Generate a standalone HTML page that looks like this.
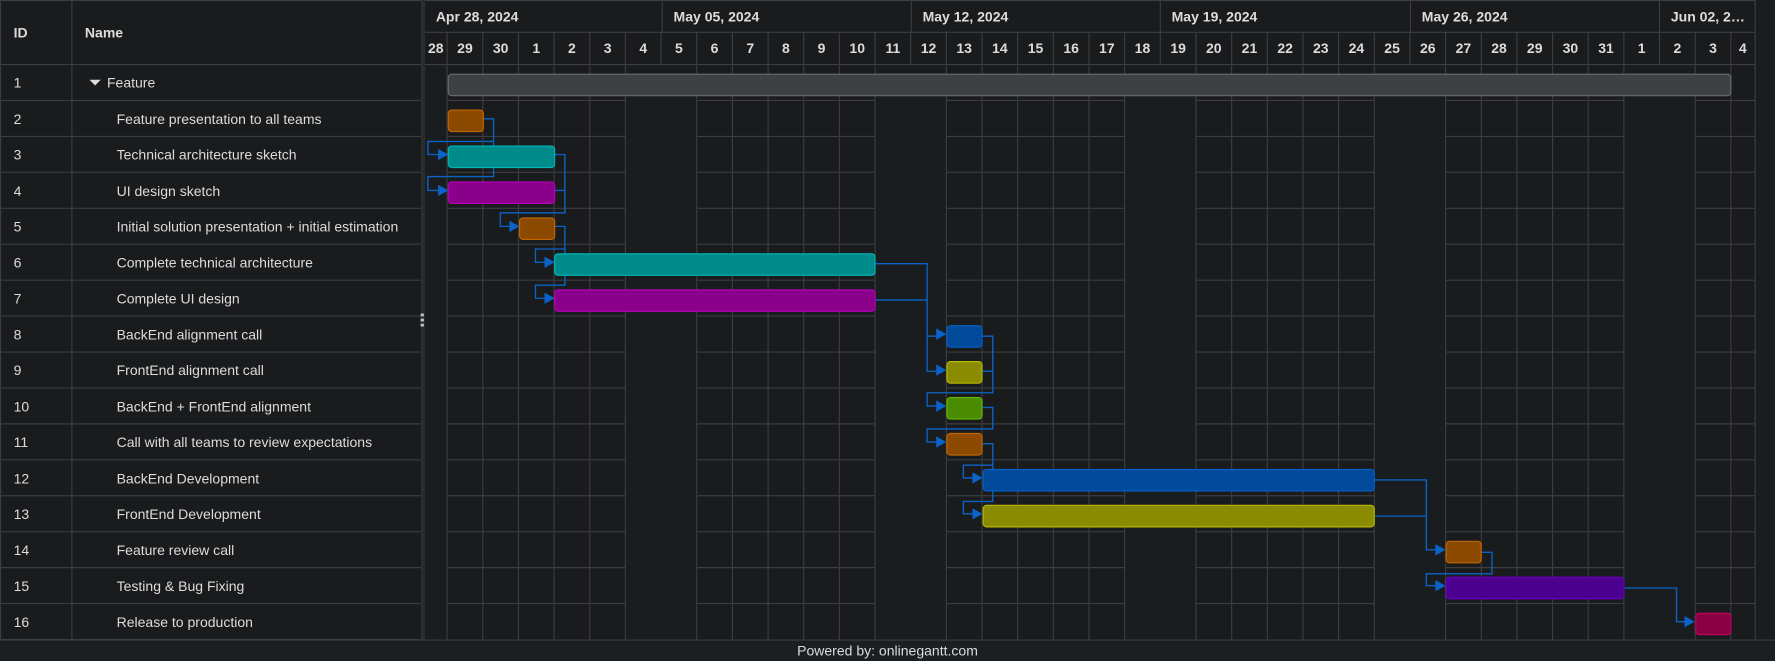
<!DOCTYPE html>
<html><head><meta charset="utf-8"><style>
html,body{margin:0;padding:0;background:#1a1b1d;overflow:hidden}
svg{display:block}
text{font-family:"Liberation Sans",Arial,sans-serif;fill:#dcdcdc}
.h{font-weight:bold;font-size:12.4px}
.t{font-size:12.4px}
.d{font-weight:bold;font-size:12.4px;text-anchor:middle}
.g{stroke:#3b3d40;stroke-width:1;fill:none}
.a{stroke:#0a64c8;stroke-width:1.2;fill:none}
.ah{fill:#0a64c8}
</style></head><body>
<svg width="1775" height="661" viewBox="0 0 1568 584" preserveAspectRatio="none" xmlns="http://www.w3.org/2000/svg">
<rect x="0" y="0" width="1568" height="584" fill="#1a1b1d"/>
<g fill="#1a1d1f">
<rect x="375" y="57" width="20" height="508"/>
<rect x="552.5" y="57" width="63" height="508"/>
<rect x="773" y="57" width="63" height="508"/>
<rect x="993.5" y="57" width="63" height="508"/>
<rect x="1214" y="57" width="63" height="508"/>
<rect x="1434.5" y="57" width="63" height="508"/>
<rect x="1550" y="0" width="18" height="565"/>
</g>
<rect x="0" y="565" width="1568" height="19" fill="#1c1f21"/>
<line x1="0" y1="565.5" x2="1568" y2="565.5" class="g"/>
<text x="784" y="579" class="t" text-anchor="middle">Powered by: onlinegantt.com</text>
<g class="g">
<path id="rl" d="M395 0H552.5M615.5 0H773M836 0H993.5M1056.5 0H1214M1277 0H1434.5M1497.5 0H1550"/>
</g>
<g class="g">
<use href="#rl" y="88.75"/><use href="#rl" y="120.5"/><use href="#rl" y="152.25"/><use href="#rl" y="184"/><use href="#rl" y="215.75"/><use href="#rl" y="247.5"/><use href="#rl" y="279.25"/><use href="#rl" y="311"/><use href="#rl" y="342.75"/><use href="#rl" y="374.5"/><use href="#rl" y="406.25"/><use href="#rl" y="438"/><use href="#rl" y="469.75"/><use href="#rl" y="501.5"/><use href="#rl" y="533.25"/>
</g>
<g class="g">
<rect x="0.5" y="0.5" width="372" height="564.5"/>
<line x1="63.5" y1="0" x2="63.5" y2="565"/>
<path d="M0 57H373M0 88.75H373M0 120.5H373M0 152.25H373M0 184H373M0 215.75H373M0 247.5H373M0 279.25H373M0 311H373M0 342.75H373M0 374.5H373M0 406.25H373M0 438H373M0 469.75H373M0 501.5H373M0 533.25H373"/>
<path d="M375 0.5H1550M375 28.5H1550M375 57H1550M1550.5 0V565"/>
<path d="M585 0V28M805 0V28M1025 0V28M1246 0V28M1466 0V28"/>
<path d="M395 28V57M426.5 28V57M458 28V57M489.5 28V57M521 28V57M552.5 28V57M584 28V57M615.5 28V57M647 28V57M678.5 28V57M710 28V57M741.5 28V57M773 28V57M804.5 28V57M836 28V57M867.5 28V57M899 28V57M930.5 28V57M962 28V57M993.5 28V57M1025 28V57M1056.5 28V57M1088 28V57M1119.5 28V57M1151 28V57M1182.5 28V57M1214 28V57M1245.5 28V57M1277 28V57M1308.5 28V57M1340 28V57M1371.5 28V57M1403 28V57M1434.5 28V57M1466 28V57M1497.5 28V57M1529 28V57"/>
<path d="M395 57V565M426.5 57V565M458 57V565M489.5 57V565M521 57V565M552.5 57V565M615.5 57V565M647 57V565M678.5 57V565M710 57V565M741.5 57V565M773 57V565M836 57V565M867.5 57V565M899 57V565M930.5 57V565M962 57V565M993.5 57V565M1056.5 57V565M1088 57V565M1119.5 57V565M1151 57V565M1182.5 57V565M1214 57V565M1277 57V565M1308.5 57V565M1340 57V565M1371.5 57V565M1403 57V565M1434.5 57V565M1497.5 57V565M1529 57V565"/>
</g>
<rect x="372" y="0" width="3.5" height="565" fill="#2a2d30"/>
<rect x="371.5" y="277" width="3" height="2.5" fill="#bbb"/><rect x="371.5" y="281.5" width="3" height="2.5" fill="#bbb"/><rect x="371.5" y="286" width="3" height="2.5" fill="#bbb"/>
<text x="12" y="33" class="h">ID</text>
<text x="75" y="33" class="h">Name</text>
<text x="385" y="19" class="h">Apr 28, 2024</text>
<text x="595" y="19" class="h">May 05, 2024</text>
<text x="815" y="19" class="h">May 12, 2024</text>
<text x="1035" y="19" class="h">May 19, 2024</text>
<text x="1256" y="19" class="h">May 26, 2024</text>
<text x="1476" y="19" class="h">Jun 02, 2…</text>
<g>
<text x="385" y="47" class="d">28</text><text x="410.75" y="47" class="d">29</text><text x="442.25" y="47" class="d">30</text><text x="473.75" y="47" class="d">1</text><text x="505.25" y="47" class="d">2</text><text x="536.75" y="47" class="d">3</text><text x="568.25" y="47" class="d">4</text><text x="599.75" y="47" class="d">5</text><text x="631.25" y="47" class="d">6</text><text x="662.75" y="47" class="d">7</text><text x="694.25" y="47" class="d">8</text><text x="725.75" y="47" class="d">9</text><text x="757.25" y="47" class="d">10</text><text x="788.75" y="47" class="d">11</text><text x="820.25" y="47" class="d">12</text><text x="851.75" y="47" class="d">13</text><text x="883.25" y="47" class="d">14</text><text x="914.75" y="47" class="d">15</text><text x="946.25" y="47" class="d">16</text><text x="977.75" y="47" class="d">17</text><text x="1009.25" y="47" class="d">18</text><text x="1040.75" y="47" class="d">19</text><text x="1072.25" y="47" class="d">20</text><text x="1103.75" y="47" class="d">21</text><text x="1135.25" y="47" class="d">22</text><text x="1166.75" y="47" class="d">23</text><text x="1198.25" y="47" class="d">24</text><text x="1229.75" y="47" class="d">25</text><text x="1261.25" y="47" class="d">26</text><text x="1292.75" y="47" class="d">27</text><text x="1324.25" y="47" class="d">28</text><text x="1355.75" y="47" class="d">29</text><text x="1387.25" y="47" class="d">30</text><text x="1418.75" y="47" class="d">31</text><text x="1450.25" y="47" class="d">1</text><text x="1481.75" y="47" class="d">2</text><text x="1513.25" y="47" class="d">3</text><text x="1539.5" y="47" class="d">4</text>
</g>
<g>
<text x="12" y="77.5" class="t">1</text><path d="M79 70.5h10l-5 5z" fill="#dcdcdc"/><text x="94.5" y="77.5" class="t">Feature</text>
<text x="12" y="109.5" class="t">2</text><text x="103" y="109.5" class="t">Feature presentation to all teams</text>
<text x="12" y="141" class="t">3</text><text x="103" y="141" class="t">Technical architecture sketch</text>
<text x="12" y="173" class="t">4</text><text x="103" y="173" class="t">UI design sketch</text>
<text x="12" y="204.5" class="t">5</text><text x="103" y="204.5" class="t">Initial solution presentation + initial estimation</text>
<text x="12" y="236.5" class="t">6</text><text x="103" y="236.5" class="t">Complete technical architecture</text>
<text x="12" y="268" class="t">7</text><text x="103" y="268" class="t">Complete UI design</text>
<text x="12" y="300" class="t">8</text><text x="103" y="300" class="t">BackEnd alignment call</text>
<text x="12" y="331.5" class="t">9</text><text x="103" y="331.5" class="t">FrontEnd alignment call</text>
<text x="12" y="363.5" class="t">10</text><text x="103" y="363.5" class="t">BackEnd + FrontEnd alignment</text>
<text x="12" y="395" class="t">11</text><text x="103" y="395" class="t">Call with all teams to review expectations</text>
<text x="12" y="427" class="t">12</text><text x="103" y="427" class="t">BackEnd Development</text>
<text x="12" y="458.5" class="t">13</text><text x="103" y="458.5" class="t">FrontEnd Development</text>
<text x="12" y="490.5" class="t">14</text><text x="103" y="490.5" class="t">Feature review call</text>
<text x="12" y="522" class="t">15</text><text x="103" y="522" class="t">Testing &amp; Bug Fixing</text>
<text x="12" y="554" class="t">16</text><text x="103" y="554" class="t">Release to production</text>
</g>
<g class="a">
<path d="M427 105H436V156H378V168.25H390"/>
<path d="M436 125H378V136.5H390"/>
<path d="M490 136.5H499V188H442V200H453"/>
<path d="M490 168.25H499"/>
<path d="M490 200H499V252H473V263.5H484"/>
<path d="M499 220H473V231.75H484"/>
<path d="M773 233H819V328H830"/>
<path d="M773 265H819"/>
<path d="M819 297H830"/>
<path d="M868 297H877V347H819V358.75H830"/>
<path d="M868 328H877"/>
<path d="M868 360H877V379H819V390.5H830"/>
<path d="M868 392H877V443H851V454H862"/>
<path d="M877 411H851V422.25H862"/>
<path d="M1214 424H1260V485.75H1271"/>
<path d="M1214 456H1260"/>
<path d="M1309 488H1318V507H1260V517.5H1271"/>
<path d="M1435 519.5H1481V549.25H1491"/>
</g>
<g class="ah">
<path d="M387 131.5l9 5-9 5z"/><path d="M387 163.25l9 5-9 5z"/><path d="M450 195l9 5-9 5z"/>
<path d="M481 226.75l9 5-9 5z"/><path d="M481 258.5l9 5-9 5z"/>
<path d="M827 290.25l9 5-9 5z"/><path d="M827 322l9 5-9 5z"/><path d="M827 353.75l9 5-9 5z"/><path d="M827 385.5l9 5-9 5z"/>
<path d="M859 417.25l9 5-9 5z"/><path d="M859 449l9 5-9 5z"/>
<path d="M1268 480.75l9 5-9 5z"/><path d="M1268 512.5l9 5-9 5z"/><path d="M1488 544.25l9 5-9 5z"/>
</g>
<g stroke-width="1">
<rect x="396" y="65.5" width="1133" height="19" rx="3" fill="#3d4144" stroke="#6b6b6b"/>
<rect x="396" y="97.25" width="31" height="19" rx="3" fill="#8b4a00" stroke="#c46600"/>
<rect x="396" y="129" width="94" height="19" rx="3" fill="#008b8b" stroke="#00b8b8"/>
<rect x="396" y="160.75" width="94" height="19" rx="3" fill="#8b008b" stroke="#b800b8"/>
<rect x="459" y="192.5" width="31" height="19" rx="3" fill="#8b4a00" stroke="#c46600"/>
<rect x="490" y="224.25" width="283" height="19" rx="3" fill="#008b8b" stroke="#00b8b8"/>
<rect x="490" y="256" width="283" height="19" rx="3" fill="#8b008b" stroke="#b800b8"/>
<rect x="836.5" y="287.75" width="31" height="19" rx="3" fill="#004a99" stroke="#0060cc"/>
<rect x="836.5" y="319.5" width="31" height="19" rx="3" fill="#8b8b00" stroke="#b8b800"/>
<rect x="836.5" y="351.25" width="31" height="19" rx="3" fill="#4a8b00" stroke="#66b800"/>
<rect x="836.5" y="383" width="31" height="19" rx="3" fill="#8b4a00" stroke="#c46600"/>
<rect x="868.5" y="414.75" width="345.5" height="19" rx="3" fill="#004a99" stroke="#0060cc"/>
<rect x="868.5" y="446.5" width="345.5" height="19" rx="3" fill="#8b8b00" stroke="#b8b800"/>
<rect x="1277.5" y="478.25" width="31" height="19" rx="3" fill="#8b4a00" stroke="#c46600"/>
<rect x="1277.5" y="510" width="157" height="19" rx="3" fill="#4b0090" stroke="#6a00c0"/>
<rect x="1498" y="541.75" width="31" height="19" rx="3" fill="#8b0045" stroke="#c0005e"/>
</g>
</svg>
</body></html>
